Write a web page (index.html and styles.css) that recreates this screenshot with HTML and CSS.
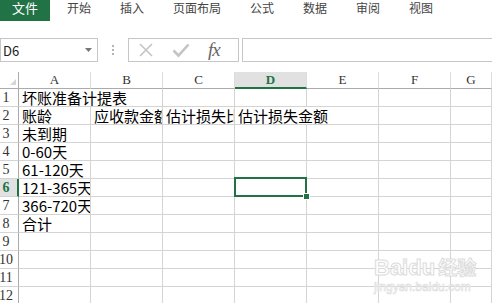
FILE: index.html
```html
<!DOCTYPE html>
<html lang="zh-CN">
<head>
  <meta charset="UTF-8" />
  <title>坏账准备计提表</title>
  <link rel="stylesheet" href="styles.css">
</head>
<body>

  <!-- Ribbon tabs -->
  <nav class="tabs">
    <div class="tab tab-file">文件</div>
    <div class="tab">开始</div>
    <div class="tab">插入</div>
    <div class="tab">页面布局</div>
    <div class="tab">公式</div>
    <div class="tab">数据</div>
    <div class="tab">审阅</div>
    <div class="tab">视图</div>
  </nav>

  <!-- Formula bar -->
  <div class="formula-bar">
    <div class="name-box">
      <span>D6</span>
      <svg class="caret" width="7" height="4" viewBox="0 0 7 4"><path d="M0 0h7L3.5 4z" fill="#777"/></svg>
    </div>
    <div class="grip"><i></i><i></i><i></i></div>
    <div class="fx-box">
      <svg width="16" height="16" viewBox="0 0 16 16"><path d="M2 2L14 14M14 2L2 14" stroke="#c4c4c4" stroke-width="1.6" fill="none"/></svg>
      <svg width="18" height="16" viewBox="0 0 18 16"><path d="M1.5 8.5L6.5 13.5L16.5 2.5" stroke="#c4c4c4" stroke-width="2.6" fill="none"/></svg>
      <span class="fx">fx</span>
    </div>
    <div class="formula-input"></div>
  </div>

  <!-- Sheet -->
  <div class="sheet" id="sheet"></div>

  <div class="watermark">
    <div class="wm-logo">Bai<span class="wm-du">du</span><span class="wm-cn">经验</span></div>
    <div class="wm-url">jingyan.baidu.com</div>
  </div>

  <script>
    const cols = ['A', 'B', 'C', 'D', 'E', 'F', 'G'];
    const cells = {
      A1: ['坏账准备计提表', 2],
      A2: ['账龄'],
      B2: ['应收款金额'],
      C2: ['估计损失比例'],
      D2: ['估计损失金额', 2],
      A3: ['未到期'],
      A4: ['0-60天'],
      A5: ['61-120天'],
      A6: ['121-365天'],
      A7: ['366-720天'],
      A8: ['合计']
    };

    const sheet = document.getElementById('sheet');

    function addCell(cls, text, span) {
      const el = document.createElement('div');
      el.className = cls;
      if (text) el.textContent = text;
      if (span) el.style.gridColumn = 'span ' + span;
      sheet.appendChild(el);
      return el;
    }

    // header row
    addCell('corner', '');
    cols.forEach(c => {
      addCell('col-head' + (c === 'D' ? ' active' : ''), c);
    });

    for (let r = 1; r <= 12; r++) {
      const rh = addCell('row-head' + (r === 6 ? ' active' : ''), '');
      rh.innerHTML = '<span>' + r + '</span>';
      let skip = 0;
      cols.forEach(c => {
        if (skip > 0) { skip--; return; }
        const data = cells[c + r];
        const span = data && data[1] ? data[1] : 0;
        if (span) skip = span - 1;
        const el = addCell('cell', data ? data[0] : '', span);
        if (c + r === 'D6') el.classList.add('selected');
      });
    }
  </script>
</body>
</html>
```

FILE: styles.css
```css
body {
  margin: 0;
  width: 492px;
  height: 303px;
  overflow: hidden;
  background: #fff;
  font-family: "Noto Sans CJK SC", "Noto Sans", sans-serif;
  position: relative;
}

/* ribbon tabs */
.tabs {
  display: flex;
  align-items: flex-start;
  gap: 29px;
  height: 21px;
}

.tab {
  font-size: 12px;
  line-height: 16px;
  color: #444;
}

.tab-file {
  width: 50px;
  height: 21px;
  margin-right: -12px;
  background: #217346;
  color: #fff;
  text-align: center;
  font-size: 13px;
}

/* formula bar */
.formula-bar {
  display: flex;
  align-items: center;
  height: 24px;
  margin-top: 17px;
}

.name-box {
  box-sizing: border-box;
  width: 98px;
  height: 24px;
  border: 1px solid #c6c6c6;
  display: flex;
  align-items: center;
  justify-content: space-between;
  padding: 0 5px 0 2px;
  font-size: 13px;
  color: #222;
}

.grip {
  width: 30px;
  display: flex;
  flex-direction: column;
  align-items: center;
  gap: 2px;
}

.grip i {
  width: 2px;
  height: 2px;
  background: #b5b5b5;
}

.fx-box {
  box-sizing: border-box;
  width: 111px;
  height: 24px;
  border: 1px solid #c6c6c6;
  display: flex;
  align-items: center;
  padding-left: 9px;
  gap: 18px;
}

.fx {
  font-family: "Liberation Serif", serif;
  font-style: italic;
  font-size: 19px;
  color: #666;
  line-height: 20px;
  letter-spacing: -1px;
}

.formula-input {
  flex: 1;
  height: 24px;
  box-sizing: border-box;
  margin-left: 3px;
  border: 1px solid #c6c6c6;
  border-right: none;
}

/* sheet */
.sheet {
  display: grid;
  grid-template-columns: 19px repeat(6, 72px) 41px;
  grid-template-rows: 17px;
  grid-auto-rows: 18px;
  margin-top: 10px;
}

.corner {
  position: relative;
  border-right: 1px solid #ababab;
  border-bottom: 1px solid #ababab;
}

.corner::after {
  content: "";
  position: absolute;
  right: 2px;
  bottom: 3px;
  border-left: 6px solid transparent;
  border-bottom: 6px solid #d6d6d6;
}

.col-head {
  box-sizing: border-box;
  border-right: 1px solid #dcdcdc;
  border-bottom: 1px solid #ababab;
  text-align: center;
  font-family: "Liberation Serif", serif;
  font-size: 13px;
  line-height: 16px;
  color: #333;
}

.col-head.active {
  background: #e1e1e1;
  border-bottom: 2px solid #217346;
  color: #217346;
  font-weight: bold;
}

.row-head {
  box-sizing: border-box;
  border-right: 1px solid #ababab;
  border-bottom: 1px solid #d4d4d4;
  overflow: hidden;
  display: flex;
}

.row-head span {
  width: 12px;
  display: flex;
  justify-content: center;
  font-family: "Liberation Serif", serif;
  font-size: 14px;
  line-height: 18px;
  color: #333;
}

.row-head.active {
  background: #e1e1e1;
  border-right: 2px solid #217346;
}

.row-head.active span {
  color: #217346;
  font-weight: bold;
}

.cell {
  box-sizing: border-box;
  border-right: 1px solid #d4d4d4;
  border-bottom: 1px solid #d4d4d4;
  padding-left: 3px;
  font-size: 15px;
  line-height: 18px;
  color: #000;
  white-space: nowrap;
  overflow: hidden;
}

.cell.selected {
  position: relative;
  overflow: visible;
}

.cell.selected::before {
  content: "";
  position: absolute;
  top: -2px;
  left: -1px;
  right: -1px;
  bottom: -1px;
  border: 2px solid #217346;
}

.cell.selected::after {
  content: "";
  position: absolute;
  right: -4px;
  bottom: -4px;
  width: 5px;
  height: 5px;
  background: #217346;
  border: 1px solid #fff;
}

/* watermark */
.watermark {
  position: absolute;
  left: 374px;
  top: 255px;
  color: #fff;
  -webkit-text-stroke: 1px #dcdcdc;
  font-family: "Liberation Sans", sans-serif;
}

.wm-logo {
  font-size: 22px;
  font-weight: bold;
  line-height: 24px;
}

.wm-cn {
  font-family: "Noto Sans CJK SC", sans-serif;
  font-size: 19px;
  margin-left: 3px;
}

.wm-url {
  font-size: 12px;
  line-height: 14px;
  -webkit-text-stroke: 0.6px #dcdcdc;
}
```
